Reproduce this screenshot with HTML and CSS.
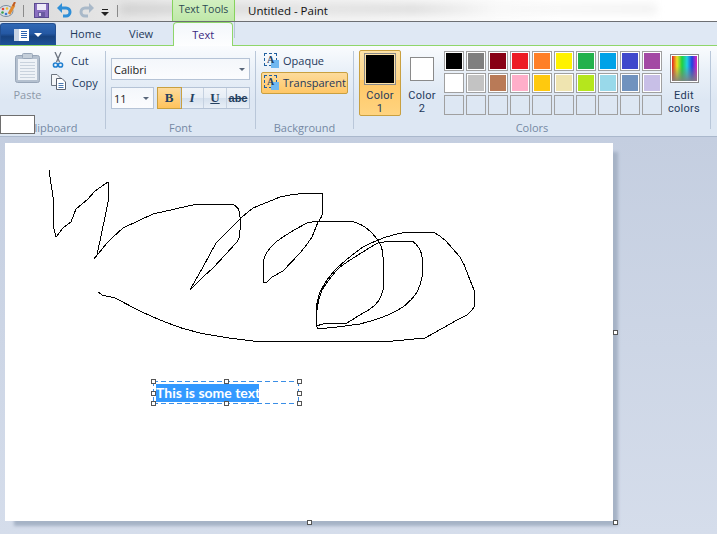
FILE: index.html
```html
<!DOCTYPE html>
<html lang="en">
<head>
    <meta charset="UTF-8">
    <meta name="viewport" content="width=device-width, initial-scale=1.0">
    <title>Untitled - Paint</title>
    <link rel="stylesheet" href="styles.css">
</head>
<body>
    <div class="titlebar">
        <svg class="qa-app" width="16" height="16" viewBox="0 0 16 16">
            <ellipse cx="6" cy="9" rx="7" ry="5.5" fill="#d8e0e8" stroke="#7c8da0"/>
            <circle cx="3" cy="7" r="1.3" fill="#e04a3a"/>
            <circle cx="7" cy="6.5" r="1.3" fill="#f0c030"/>
            <circle cx="2.5" cy="10.5" r="1.3" fill="#3aa04a"/>
            <circle cx="6" cy="12" r="1.3" fill="#3a78d0"/>
            <path d="M9 12 L14 3" stroke="#e08a30" stroke-width="3"/>
            <path d="M13 4 L15 0" stroke="#c05a20" stroke-width="2"/>
        </svg>
        <span class="qa-sep"></span>
        <svg class="qa-save" width="15" height="15" viewBox="0 0 15 15">
            <rect x="0.5" y="0.5" width="14" height="14" fill="#8a6fc0" stroke="#5a4a90"/>
            <rect x="3" y="1" width="9" height="6" fill="#eeeaf8"/>
            <rect x="4" y="9" width="7" height="5" fill="#6a5aa0"/>
            <rect x="5" y="10" width="2" height="3" fill="#d8d0f0"/>
        </svg>
        <svg class="qa-undo" width="15" height="15" viewBox="0 0 15 15">
            <path d="M3 5 H9 A4 4 0 0 1 9 13 H6" fill="none" stroke="#2f8fd8" stroke-width="3"/>
            <path d="M0 5 L5 0 V10 Z" fill="#2f8fd8"/>
        </svg>
        <svg class="qa-redo" width="15" height="15" viewBox="0 0 15 15">
            <path d="M12 5 H6 A4 4 0 0 0 6 13 H9" fill="none" stroke="#a9b9c9" stroke-width="3"/>
            <path d="M15 5 L10 0 V10 Z" fill="#a9b9c9"/>
        </svg>
        <svg class="qa-more" width="8" height="7" viewBox="0 0 8 7">
            <rect x="1" y="0" width="6" height="1" fill="#222"/>
            <path d="M0 3 H8 L4 7 Z" fill="#222"/>
        </svg>
        <span class="qa-sep qa-sep-last"></span>
        <div class="context-tab">Text Tools</div>
        <div class="window-title">Untitled - Paint</div>
        <span class="glass-smudge"></span>
    </div>

    <div class="tabrow">
        <div class="app-button">
            <svg width="15" height="12" viewBox="0 0 15 12">
                <rect width="15" height="12" fill="#fff"/>
                <rect x="0" y="0" width="5" height="12" fill="#c8d4e4"/>
                <path d="M7 2.5 H13 M7 4.5 H13 M7 6.5 H13 M7 8.5 H13" stroke="#2b62b0"/>
            </svg>
            <span class="app-arrow"></span>
        </div>
        <div class="tab tab-home">Home</div>
        <div class="tab tab-view">View</div>
        <div class="tab-active">Text</div>
        <span class="tab-tick"></span>
    </div>

    <div class="ribbon">
        <section class="group group-clipboard">
            <div class="group-body">
                <div class="paste">
                    <svg width="25" height="30" viewBox="0 0 25 30">
                        <rect x="0.5" y="2.5" width="24" height="27" rx="2" fill="#b4c0cf" stroke="#98a6b8"/>
                        <rect x="3" y="6" width="19" height="21" fill="#eef2f7"/>
                        <path d="M5 9.5H20M5 12.5H20M5 15.5H20M5 18.5H20M5 21.5H20M5 24.5H20" stroke="#c9d2dd"/>
                        <rect x="7.5" y="0.5" width="10" height="5" rx="1" fill="#c4ced9" stroke="#98a6b8"/>
                    </svg>
                    <span>Paste</span>
                </div>
                <div class="clip-actions">
                    <div class="clip-row">
                        <svg width="14" height="16" viewBox="0 0 14 16">
                            <path d="M4 0 L8.5 10 M10 0 L5.5 10" stroke="#6c7480" stroke-width="1.3" fill="none"/>
                            <circle cx="4.5" cy="13" r="2.1" fill="none" stroke="#1f7fd0" stroke-width="1.5"/>
                            <circle cx="9.5" cy="13" r="2.1" fill="none" stroke="#1f7fd0" stroke-width="1.5"/>
                        </svg>
                        <span>Cut</span>
                    </div>
                    <div class="clip-row">
                        <svg width="15" height="16" viewBox="0 0 15 16">
                            <path d="M0.5 0.5 H6 L9 3.5 V11.5 H0.5 Z" fill="#f4f6f8" stroke="#6d7580"/>
                            <path d="M5.5 4.5 H11 L14.5 8 V15.5 H5.5 Z" fill="#fff" stroke="#5a6270"/>
                            <path d="M7.5 9.5H12.5M7.5 11.5H12.5M7.5 13.5H12.5" stroke="#4a78b0"/>
                        </svg>
                        <span>Copy</span>
                    </div>
                </div>
            </div>
            <div class="group-label">Clipboard</div>
        </section>

        <section class="group group-font">
            <div class="group-body font-body">
                <div class="select select-family">
                    <span>Calibri</span>
                    <i class="caret"></i>
                </div>
                <div class="font-row">
                    <div class="select select-size">
                        <span>11</span>
                        <i class="caret"></i>
                    </div>
                    <div class="format-buttons">
                        <div class="fmt fmt-on fmt-b">B</div>
                        <div class="fmt fmt-i">I</div>
                        <div class="fmt fmt-u">U</div>
                        <div class="fmt fmt-s">abc</div>
                    </div>
                </div>
            </div>
            <div class="group-label">Font</div>
        </section>

        <section class="group group-background">
            <div class="group-body bg-body">
                <div class="bg-option">
                    <span class="bg-icon"><span class="bg-a">A</span></span>
                    <span class="bg-text">Opaque</span>
                </div>
                <div class="bg-option bg-option-on">
                    <span class="bg-icon"><span class="bg-a">A</span></span>
                    <span class="bg-text">Transparent</span>
                </div>
            </div>
            <div class="group-label">Background</div>
        </section>

        <section class="group group-colors">
            <div class="group-body colors-body">
                <div class="color-btn color-btn-on">
                    <span class="color-well well-1"><span class="fill-black"></span></span>
                    <span class="color-text">Color<br>1</span>
                </div>
                <div class="color-btn">
                    <span class="color-well well-2"></span>
                    <span class="color-text">Color<br>2</span>
                </div>
                <div class="palette">
                    <span class="swatch"><i class="c1"></i></span>
                    <span class="swatch"><i class="c2"></i></span>
                    <span class="swatch"><i class="c3"></i></span>
                    <span class="swatch"><i class="c4"></i></span>
                    <span class="swatch"><i class="c5"></i></span>
                    <span class="swatch"><i class="c6"></i></span>
                    <span class="swatch"><i class="c7"></i></span>
                    <span class="swatch"><i class="c8"></i></span>
                    <span class="swatch"><i class="c9"></i></span>
                    <span class="swatch"><i class="c10"></i></span>
                    <span class="swatch"><i class="c11"></i></span>
                    <span class="swatch"><i class="c12"></i></span>
                    <span class="swatch"><i class="c13"></i></span>
                    <span class="swatch"><i class="c14"></i></span>
                    <span class="swatch"><i class="c15"></i></span>
                    <span class="swatch"><i class="c16"></i></span>
                    <span class="swatch"><i class="c17"></i></span>
                    <span class="swatch"><i class="c18"></i></span>
                    <span class="swatch"><i class="c19"></i></span>
                    <span class="swatch"><i class="c20"></i></span>
                    <span class="swatch swatch-empty"></span>
                    <span class="swatch swatch-empty"></span>
                    <span class="swatch swatch-empty"></span>
                    <span class="swatch swatch-empty"></span>
                    <span class="swatch swatch-empty"></span>
                    <span class="swatch swatch-empty"></span>
                    <span class="swatch swatch-empty"></span>
                    <span class="swatch swatch-empty"></span>
                    <span class="swatch swatch-empty"></span>
                    <span class="swatch swatch-empty"></span>
                </div>
                <div class="edit-colors">
                    <span class="rainbow"></span>
                    <span class="color-text">Edit<br>colors</span>
                </div>
            </div>
            <div class="group-label">Colors</div>
        </section>
    </div>

    <div class="workspace">
        <div class="canvas">
            <svg class="drawing" width="608" height="378" viewBox="5 143 608 378">
                <path class="ink" d="M49 170 L53 197 L53 225 L56 237 L63 228 L71 222 L76 209 L88 199 L95 191 L108 182 L109 197 L105 217 L97 255 L94 259 L107 243 Q115 235 123 228 L153 214 L197 204 L230 204 Q240 205 240 217 L240 230 Q240 238 237 242 L213 268 L203 277 L193 287 Q190 291 191 288 L203 267 L216 243 L242 217 L253 208 L280 197 Q295 193 322 193 L323 210 Q322 218 318 222 L312 237 Q307 245 300 253 L283 271 L272 277 L266 283 L263 282 L263 262 Q265 254 270 248 Q276 241 283 237 Q295 229 307 223 Q314 221 322 221 L350 221 Q359 223 365 227 Q372 232 378 240 Q383 248 383 257 L383 290 Q381 299 375 305 Q370 310 363 313 L347 323 L323 324 L316 326 L316 310 Q317 300 320 292 Q327 278 337 268 Q350 256 363 247 Q373 242 383 238 Q395 234 407 232 L433 232 Q439 235 445 240 L460 257 Q465 265 468 275 L474 290 L474 307 Q471 312 467 315 L457 320 L443 328 L425 338 L393 341 L253 341 Q225 338 200 333 Q182 329 165 322 Q150 316 138 310 L115 298 L102 295 L98 292"/>
                <path class="ink" d="M318 329 Q340 327 360 324 Q372 321 383 317 Q394 313 403 307 Q412 300 417 292 Q423 280 423 267 Q423 256 420 250 Q417 244 412 241 L390 241 L378 243 Q370 247 363 252 Q351 259 340 267 Q330 277 322 290 Q318 300 317 310 L316 325 L318 329"/>
            </svg>
            <div class="textbox">
                <span class="textbox-text">This is some text</span>
                <i class="handle h-tl"></i><i class="handle h-tc"></i><i class="handle h-tr"></i>
                <i class="handle h-ml"></i><i class="handle h-mr"></i>
                <i class="handle h-bl"></i><i class="handle h-bc"></i><i class="handle h-br"></i>
            </div>
            <i class="handle canvas-r"></i>
            <i class="handle canvas-b"></i>
            <i class="handle canvas-c"></i>
        </div>
    </div>

    <div class="stray-box"></div>
</body>
</html>
```

FILE: styles.css
```css
html, body {
    height: 100%;
}

body {
    margin: 0;
    width: 717px;
    height: 534px;
    overflow: hidden;
    position: relative;
    display: flex;
    flex-direction: column;
    font-family: "Open Sans", "Noto Sans", sans-serif;
    font-size: 11px;
    color: #1e395b;
    background: #d4dcea;
}

/* title bar */

.titlebar {
    height: 21px;
    flex: none;
    display: flex;
    align-items: center;
    position: relative;
    overflow: hidden;
    border-bottom: 1px solid #6d6f73;
    background: linear-gradient(90deg, #d9d9d9 0, #ececec 170px, #f3f3f3 340px, #ffffff 560px);
}

.glass-smudge {
    position: absolute;
    left: 120px;
    right: 60px;
    top: 4px;
    height: 10px;
    z-index: 0;
    background: linear-gradient(90deg, #b8b8b8 0, #d4d4d4 35%, #c4c4c4 55%, #f4f4f4 70%, #e4e4e4 100%);
    filter: blur(4px);
    opacity: 0.5;
}

.qa-app {
    margin-left: 0;
    flex: none;
    margin-top: -2px;
    z-index: 1;
}

.qa-sep {
    width: 1px;
    height: 12px;
    background: #8a8a8a;
    margin-left: 7px;
    flex: none;
    z-index: 1;
}

.qa-save {
    margin-left: 10px;
    z-index: 1;
}

.qa-undo {
    margin-left: 8px;
    z-index: 1;
}

.qa-redo {
    margin-left: 7px;
    z-index: 1;
}

.qa-more {
    margin-left: 7px;
    margin-top: 3px;
    z-index: 1;
}

.qa-sep-last {
    margin-left: 8px;
}

.context-tab {
    margin-left: 54px;
    width: 63px;
    height: 21px;
    box-sizing: border-box;
    border-left: 1px solid #86d35c;
    border-right: 1px solid #86d35c;
    background: linear-gradient(#d3f0c2, #bfe8a8);
    text-align: center;
    line-height: 18px;
    font-size: 10.5px;
    color: #2c4a52;
    z-index: 1;
}

.window-title {
    margin-left: 13px;
    font-size: 11.5px;
    color: #111;
    z-index: 1;
}

/* tab row */

.tabrow {
    height: 24px;
    flex: none;
    display: flex;
    box-sizing: border-box;
    background: #dfe8f4;
    border-bottom: 1px solid #8fd66a;
    position: relative;
    font-size: 11px;
}

.app-button {
    width: 56px;
    height: 22px;
    margin-top: 1px;
    box-sizing: border-box;
    border-radius: 3px 3px 0 0;
    border: 1px solid #234f90;
    border-bottom: 0;
    background: linear-gradient(#3068b4 0, #2458a4 45%, #17427f 60%, #1e5298 100%);
    display: flex;
    align-items: center;
    justify-content: center;
    gap: 5px;
}

.app-arrow {
    width: 0;
    height: 0;
    border-left: 4px solid transparent;
    border-right: 4px solid transparent;
    border-top: 4px solid #fff;
}

.tab {
    line-height: 23px;
    color: #1e395b;
}

.tab-home {
    margin-left: 14px;
}

.tab-view {
    margin-left: 28px;
}

.tab-active {
    margin-left: 20px;
    width: 60px;
    height: 24px;
    box-sizing: border-box;
    text-align: center;
    line-height: 23px;
    color: #3a2a80;
    border: 1px solid #8fd66a;
    border-bottom: 0;
    border-radius: 4px 4px 0 0;
    background: linear-gradient(#f4f7fb, #fdfeff);
}

.tab-tick {
    width: 1px;
    height: 16px;
    background: #b6c4d6;
    margin-left: 1px;
}

/* ribbon */

.ribbon {
    height: 91px;
    flex: none;
    display: flex;
    box-sizing: border-box;
    border-bottom: 1px solid #aab8cc;
    background: linear-gradient(#fafcfe 0, #e9f0f8 28%, #dde7f3 60%, #dde7f3 100%);
    box-shadow: 0 1px 0 #b3c0d2;
}

.group {
    display: flex;
    flex-direction: column;
    box-sizing: border-box;
    height: 78px;
    margin-top: 5px;
    border-right: 1px solid #b9c7d9;
    flex: none;
}

.group-body {
    height: 69px;
    flex: none;
}

.group-label {
    flex: none;
    text-align: center;
    font-size: 11px;
    line-height: 16px;
    color: #7589a4;
}

/* clipboard */

.group-clipboard {
    width: 106px;
}

.group-clipboard .group-body {
    display: flex;
}

.paste {
    margin-left: 15px;
    margin-top: 2px;
    width: 25px;
    display: flex;
    flex-direction: column;
    align-items: center;
    gap: 4px;
    color: #8c98a8;
}

.paste svg {
    flex: none;
}

.clip-actions {
    margin-left: 11px;
    margin-top: 1px;
    display: flex;
    flex-direction: column;
    gap: 6px;
}

.clip-row {
    height: 16px;
    display: flex;
    align-items: center;
    gap: 6px;
}

/* font */

.group-font {
    width: 150px;
}

.font-body {
    padding: 7px 0 0 5px;
    box-sizing: border-box;
}

.select {
    box-sizing: border-box;
    border: 1px solid #b5c3d6;
    background: linear-gradient(#f4f7fb, #fbfcfe);
    display: flex;
    align-items: center;
    justify-content: space-between;
    color: #222;
    padding: 0 4px 0 2px;
}

.select-family {
    width: 139px;
    height: 22px;
}

.select-size {
    width: 43px;
    height: 22px;
}

.caret {
    width: 0;
    height: 0;
    border-left: 3px solid transparent;
    border-right: 3px solid transparent;
    border-top: 3px solid #58667a;
}

.font-row {
    display: flex;
    margin-top: 7px;
    gap: 3px;
}

.format-buttons {
    display: flex;
    width: 93px;
    height: 22px;
    box-sizing: border-box;
    border: 1px solid #b5c3d6;
    background: linear-gradient(#f0f4f9 0, #e6edf5 50%, #d5e0ed 51%, #e8eff7 100%);
}

.fmt {
    flex: 1;
    text-align: center;
    line-height: 20px;
    font-family: "Liberation Serif", serif;
    font-size: 13px;
    font-weight: bold;
    color: #24405f;
    border-right: 1px solid #c5d1e0;
}

.fmt:last-child {
    border-right: 0;
}

.fmt-on {
    background: linear-gradient(#fddb9c, #ffc35c);
    box-shadow: 0 0 0 1px #c9a040;
}

.fmt-i {
    font-style: italic;
}

.fmt-u {
    text-decoration: underline;
}

.fmt-s {
    text-decoration: line-through;
    font-family: "Liberation Sans", sans-serif;
    font-size: 11px;
}

/* background */

.group-background {
    width: 98px;
}

.bg-body {
    margin-top: -1px;
    margin-bottom: 1px;
    padding: 0 0 0 5px;
    box-sizing: border-box;
    display: flex;
    flex-direction: column;
}

.bg-option {
    width: 87px;
    height: 22px;
    box-sizing: border-box;
    display: flex;
    align-items: center;
    gap: 6px;
    padding-left: 3px;
    white-space: nowrap;
}

.bg-option-on {
    border: 1px solid #c9a040;
    border-radius: 2px;
    background: linear-gradient(#fddb9c, #ffc766);
    padding-left: 2px;
}

.bg-text {
    margin-top: -2px;
}

.bg-icon {
    width: 13px;
    height: 13px;
    flex: none;
    margin-top: -3px;
    box-sizing: border-box;
    border: 1px dashed #1f5f9f;
    position: relative;
    text-align: center;
}

.bg-icon::after {
    content: "";
    position: absolute;
    right: -3px;
    bottom: -3px;
    width: 8px;
    height: 8px;
    background: #70b8f0;
}

.bg-a {
    position: relative;
    z-index: 1;
    display: block;
    font-family: "Liberation Serif", serif;
    font-weight: bold;
    font-size: 10px;
    line-height: 11px;
    color: #24405f;
}

/* colors */

.group-colors {
    width: 357px;
}

.colors-body {
    display: flex;
    padding-left: 5px;
    box-sizing: border-box;
}

.color-btn {
    width: 42px;
    height: 66px;
    margin-top: -1px;
    box-sizing: border-box;
    display: flex;
    flex-direction: column;
    align-items: center;
    flex: none;
}

.color-btn-on {
    border: 1px solid #c9a040;
    border-radius: 2px;
    background: linear-gradient(#fde2a8 0, #fdd68a 45%, #ffc766 46%, #ffd480 100%);
}

.color-text {
    font-family: Roboto, "Open Sans", sans-serif;
    font-size: 11px;
    letter-spacing: 0.3px;
    text-align: center;
    line-height: 13px;
    display: block;
}

.color-well {
    display: block;
    box-sizing: border-box;
    flex: none;
}

.well-1 {
    width: 32px;
    height: 32px;
    margin-top: 2px;
    margin-bottom: 4px;
    border: 1px solid #8a8a8a;
    padding: 1px;
    background: #fde2a8;
}

.fill-black {
    display: block;
    width: 100%;
    height: 100%;
    background: #000;
}

.well-2 {
    width: 24px;
    height: 24px;
    margin-top: 7px;
    margin-bottom: 8px;
    border: 1px solid #8a8a8a;
    background: #fff;
}

.palette {
    display: grid;
    grid-template-columns: repeat(10, 20px);
    grid-auto-rows: 20px;
    gap: 2px;
    margin-left: 1px;
    height: 64px;
    flex: none;
}

.swatch {
    box-sizing: border-box;
    border: 1px solid #a0a0a0;
    padding: 1px;
    background: #fff;
    display: block;
}

.swatch i {
    display: block;
    width: 100%;
    height: 100%;
}

.swatch-empty {
    background: transparent;
}

.c1 { background: #000000; }
.c2 { background: #7f7f7f; }
.c3 { background: #880015; }
.c4 { background: #ed1c24; }
.c5 { background: #ff7f27; }
.c6 { background: #fff200; }
.c7 { background: #22b14c; }
.c8 { background: #00a2e8; }
.c9 { background: #3f48cc; }
.c10 { background: #a349a4; }
.c11 { background: #ffffff; }
.c12 { background: #c3c3c3; }
.c13 { background: #b97a57; }
.c14 { background: #ffaec9; }
.c15 { background: #ffc90e; }
.c16 { background: #efe4b0; }
.c17 { background: #b5e61d; }
.c18 { background: #99d9ea; }
.c19 { background: #7092be; }
.c20 { background: #c8bfe7; }

.edit-colors {
    margin-left: 6px;
    margin-top: -1px;
    width: 32px;
    display: flex;
    flex-direction: column;
    align-items: center;
    flex: none;
}

.rainbow {
    display: block;
    box-sizing: border-box;
    width: 29px;
    height: 29px;
    margin-top: 4px;
    margin-bottom: 6px;
    border: 2px solid #fff;
    outline: 1px solid #8a8a8a;
    outline-offset: -1px;
    background:
        linear-gradient(rgba(255, 255, 255, 0) 40%, rgba(128, 128, 128, 0.9) 100%),
        linear-gradient(90deg, #e02020, #f0e020, #20d040, #20d0e0, #2040e0, #e020c0);
}

/* canvas */

.workspace {
    flex: 1;
    min-height: 0;
    padding: 6px 0 0 5px;
    background: linear-gradient(#c4cee0, #d5ddeb);
}

.canvas {
    width: 608px;
    height: 378px;
    position: relative;
    background: #fff;
    box-shadow: 7px 7px 3px -2px #a6b3c6;
}

.drawing {
    display: block;
}

.ink {
    fill: none;
    stroke: #000;
    stroke-width: 1;
    shape-rendering: crispEdges;
}

.textbox {
    position: absolute;
    left: 148px;
    top: 238px;
    width: 146px;
    height: 23px;
    box-sizing: border-box;
    padding: 3px 0 0 3px;
    background-image:
        repeating-linear-gradient(90deg, #3a8ee6 0 5px, transparent 5px 8px),
        repeating-linear-gradient(90deg, #3a8ee6 0 5px, transparent 5px 8px),
        repeating-linear-gradient(#3a8ee6 0 5px, transparent 5px 8px),
        repeating-linear-gradient(#3a8ee6 0 5px, transparent 5px 8px);
    background-size: 100% 1px, 100% 1px, 1px 100%, 1px 100%;
    background-position: 0 0, 0 100%, 0 0, 100% 0;
    background-repeat: no-repeat;
}

.textbox-text {
    display: block;
    width: 103px;
    height: 18px;
    overflow: hidden;
    white-space: nowrap;
    background: #3399ff;
    color: #fff;
    font-family: Lato, "Liberation Sans", sans-serif;
    font-weight: bold;
    font-size: 14px;
    line-height: 18px;
}

.handle {
    position: absolute;
    width: 5px;
    height: 5px;
    box-sizing: border-box;
    border: 1px solid #555;
    background: #fff;
}

.h-tl { left: -2px; top: -2px; }
.h-tc { left: 71px; top: -2px; }
.h-tr { left: 144px; top: -2px; }
.h-ml { left: -2px; top: 10px; }
.h-mr { left: 144px; top: 10px; }
.h-bl { left: -2px; top: 20px; }
.h-bc { left: 71px; top: 20px; }
.h-br { left: 144px; top: 20px; }

.canvas-r { left: 608px; top: 187px; }
.canvas-b { left: 302px; top: 377px; }
.canvas-c { left: 608px; top: 377px; }

/* white box sitting over the clipboard label */

.stray-box {
    position: absolute;
    left: 0;
    top: 115px;
    width: 35px;
    height: 19px;
    box-sizing: border-box;
    border: 1px solid #6e6e6e;
    background: #fff;
}
```
